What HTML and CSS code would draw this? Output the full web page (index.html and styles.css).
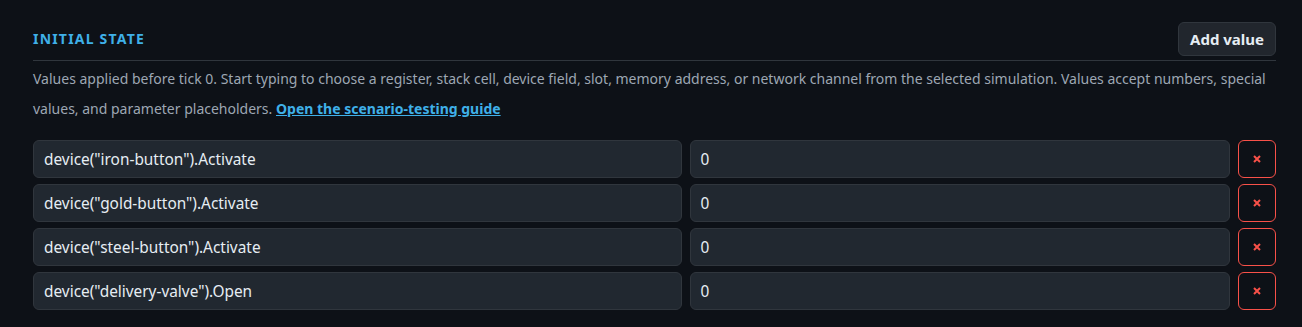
FILE: index.html
```html
<!DOCTYPE html>
<html>
<head>
<meta charset="utf-8">
<link rel="stylesheet" href="styles.css">
</head>
<body>
<section class="panel">
  <header class="panel-head">
    <h2 class="title">INITIAL STATE</h2>
    <button class="btn">Add value</button>
  </header>
  <p class="desc">Values applied before tick 0. Start typing to choose a register, stack cell, device field, slot, memory address, or network channel from the selected simulation. Values accept numbers, special values, and parameter placeholders. <a class="link" href="#">Open the scenario-testing guide</a></p>
  <div class="rows">
    <div class="row">
      <div class="field">device("iron-button").Activate</div>
      <div class="field">0</div>
      <button class="del" aria-label="Remove"><svg class="x" viewBox="0 0 8 8"><path d="M1 1L7 7M7 1L1 7"/></svg></button>
    </div>
    <div class="row">
      <div class="field">device("gold-button").Activate</div>
      <div class="field">0</div>
      <button class="del" aria-label="Remove"><svg class="x" viewBox="0 0 8 8"><path d="M1 1L7 7M7 1L1 7"/></svg></button>
    </div>
    <div class="row">
      <div class="field">device("steel-button").Activate</div>
      <div class="field">0</div>
      <button class="del" aria-label="Remove"><svg class="x" viewBox="0 0 8 8"><path d="M1 1L7 7M7 1L1 7"/></svg></button>
    </div>
    <div class="row">
      <div class="field">device("delivery-valve").Open</div>
      <div class="field">0</div>
      <button class="del" aria-label="Remove"><svg class="x" viewBox="0 0 8 8"><path d="M1 1L7 7M7 1L1 7"/></svg></button>
    </div>
  </div>
</section>
</body>
</html>
```
FILE: styles.css
```css
* { box-sizing: border-box; }
html, body { margin: 0; background: #0d1117; }
body {
  font-family: "Noto Sans", "Open Sans", sans-serif;
  color: #e6edf3;
}
.panel {
  padding: 22px 26px 0 33px;
}
.panel-head {
  display: flex;
  align-items: flex-end;
  justify-content: space-between;
  border-bottom: 1px solid #30363d;
  padding-bottom: 4px;
}
.title {
  margin: 0 0 9px 0;
  font-size: 14px;
  font-weight: 700;
  letter-spacing: 1.2px;
  color: #3fb0e8;
  line-height: 16px;
}
.btn {
  height: 34px;
  padding: 0 11px;
  background: #21262d;
  border: 1px solid #30363d;
  border-radius: 6px;
  color: #e6edf3;
  font-family: inherit;
  font-size: 15px;
  font-weight: 700;
}
.desc {
  margin: 3px 0 0 0;
  font-size: 14px;
  line-height: 30px;
  color: #9da7b3;
}
.link {
  color: #3fb0e8;
  font-weight: 700;
  text-decoration: underline;
}
.rows {
  margin-top: 16px;
  display: flex;
  flex-direction: column;
  gap: 6px;
}
.row {
  display: grid;
  grid-template-columns: 1.2fr 1fr 38px;
  gap: 8px;
}
.field {
  height: 38px;
  display: flex;
  align-items: center;
  padding: 0 10px;
  background: #212830;
  border: 1px solid #30363d;
  border-radius: 6px;
  font-size: 15.4px;
  color: #e6edf3;
}
.del {
  height: 38px;
  display: flex;
  align-items: center;
  justify-content: center;
  background: transparent;
  border: 1px solid #f85149;
  border-radius: 6px;
  padding: 0;
}
.x {
  width: 8px;
  height: 8px;
  stroke: #f85149;
  stroke-width: 2;
  fill: none;
}
```
